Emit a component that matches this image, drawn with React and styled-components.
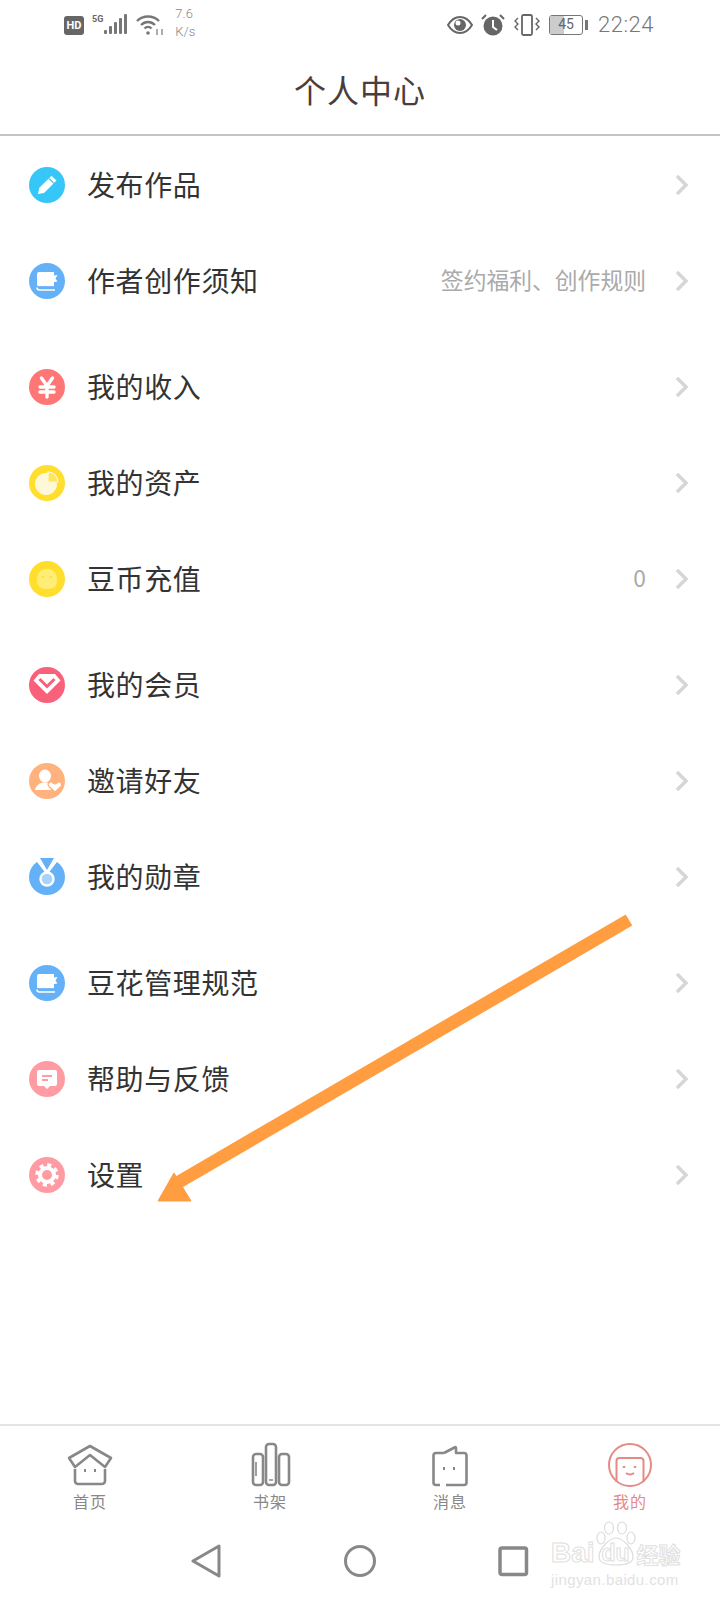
import React from 'react';
import styled, { createGlobalStyle } from 'styled-components';

const Global = createGlobalStyle`
  html, body { margin: 0; padding: 0; background: #fff; }
  body { font-family: "Noto Sans CJK SC", "Noto Sans", sans-serif; }
`;

const Disc = ({ color, children }) => (
  <svg width="38" height="38" viewBox="0 0 38 38">
    <circle cx="19" cy="19" r="18" fill={color} />
    {children}
  </svg>
);

const BookGlyph = () => (
  <>
    <path d="M9 12a2 2 0 0 1 2-2h15v3.500l3.500-.5-2 3.500 2 3-3.500.5v4.500H11a2 2 0 0 1-2-2z" fill="#fff" />
    <path d="M9 25.500q0 2.500 2.500 2.500H27" stroke="#fff" strokeWidth="1.600" fill="none" />
    <path d="M10 24.800h16" stroke="#64B1F8" strokeWidth="1.100" />
  </>
);

const menuIcons = {
  pencil: (
    <Disc color="#36C6F8">
      <path d="M10 28l1.200-6L23.500 9.800l5 4.700L16 27z" fill="#fff" />
      <path d="M21 12.500l5 4.800" stroke="#36C6F8" strokeWidth="1.100" />
    </Disc>
  ),
  book: <Disc color="#64B1F8"><BookGlyph /></Disc>,
  yen: (
    <Disc color="#FF7677">
      <path d="M13.500 10L19 18l5.500-8M12 19h14M12 24h14M19 18v11" stroke="#fff" strokeWidth="3.400" fill="none" strokeLinecap="round" />
    </Disc>
  ),
  pie: (
    <Disc color="#FFDE2E">
      <circle cx="18" cy="20" r="11" fill="#FFF8D8" />
      <path d="M20 8a10 10 0 0 1 10 10H20z" fill="#FFE55C" stroke="#FFF8D8" strokeWidth="1.200" />
    </Disc>
  ),
  coin: (
    <Disc color="#FFDE2E">
      <path d="M9 20c0-7 4-11 10-11s10 4 10 11-4 9-10 9-10-2-10-9z" fill="#FFEE75" />
      <circle cx="15" cy="17" r="0.900" fill="#F7D840" />
      <circle cx="23" cy="17" r="0.900" fill="#F7D840" />
    </Disc>
  ),
  diamond: (
    <Disc color="#F9607A">
      <path d="M11 8h16l5.500 6.500L19 28 5.500 14.500z" fill="#fff" />
      <path d="M11.500 13l7.500 7.500 7.500-7.500" stroke="#F9607A" strokeWidth="3" fill="none" />
    </Disc>
  ),
  friend: (
    <Disc color="#FFB27E">
      <ellipse cx="17" cy="14" rx="6" ry="6.500" fill="#fff" />
      <path d="M7 28c1-5 5-7.500 10-7.500 2 0 3.500.4 5 1l1 6.500z" fill="#fff" />
      <path d="M27 30l-6-5.500c-2.500-3 1.500-6.500 4-3.500l2 1 2-1c2.500-2.500 6 .5 4 3.500z" fill="#fff" stroke="#FFB27E" strokeWidth="1.200" />
    </Disc>
  ),
  medal: (
    <Disc color="#64B1F8">
      <path d="M6 0h26L19 17z" fill="#fff" />
      <path d="M12 0h14l-7 12z" fill="#64B1F8" />
      <circle cx="19" cy="21" r="6.500" fill="#A8D3FB" stroke="#fff" strokeWidth="2.400" />
    </Disc>
  ),
  feedback: (
    <Disc color="#FF9CA3">
      <path d="M9 12a2 2 0 0 1 2-2h16a2 2 0 0 1 2 2v12a2 2 0 0 1-2 2h-5l-3 3-3-3h-5a2 2 0 0 1-2-2z" fill="#fff" />
      <path d="M14 16h10M14 20h6" stroke="#FF9CA3" strokeWidth="1.800" />
    </Disc>
  ),
  gear: (
    <Disc color="#FF9CA3">
      <circle cx="19" cy="19" r="7" fill="none" stroke="#fff" strokeWidth="4" />
      <circle cx="19" cy="19" r="10" fill="none" stroke="#fff" strokeWidth="3.500" strokeDasharray="4 3.850" />
    </Disc>
  ),
};

const groups = [
  [
    { icon: 'pencil', label: '发布作品' },
    { icon: 'book', label: '作者创作须知', note: '签约福利、创作规则' },
  ],
  [
    { icon: 'yen', label: '我的收入' },
    { icon: 'pie', label: '我的资产' },
    { icon: 'coin', label: '豆币充值', note: '0' },
  ],
  [
    { icon: 'diamond', label: '我的会员' },
    { icon: 'friend', label: '邀请好友' },
    { icon: 'medal', label: '我的勋章' },
  ],
  [
    { icon: 'book', label: '豆花管理规范' },
    { icon: 'feedback', label: '帮助与反馈' },
    { icon: 'gear', label: '设置' },
  ],
];

const tabIcons = {
  home: (
    <>
      <path d="M8 27v12a3 3 0 0 0 3 3h24a3 3 0 0 0 3-3V27" />
      <path d="M23 4l21 12-6 9-15-12L8 25l-6-9z" strokeLinejoin="round" />
      <path d="M18 27v3M28 27v3" strokeWidth="2" />
    </>
  ),
  shelf: (
    <>
      <rect x="6" y="12" width="10" height="31" rx="3" />
      <rect x="19" y="2" width="10" height="41" rx="3" />
      <rect x="32" y="12" width="10" height="31" rx="3" />
      <path d="M22 38h4M9 20v14" strokeWidth="1.600" />
    </>
  ),
  chat: (
    <>
      <path d="M17 11H9a2.500 2.500 0 0 0-2.500 2.500v27A2.500 2.500 0 0 0 9 43h4M19 43h18a2.500 2.500 0 0 0 2.500-2.500v-27A2.500 2.500 0 0 0 37 11h-8V6q0-1.500-1.500-.5L17 11" strokeLinejoin="round" />
      <path d="M17 25v3M27 25v3" strokeWidth="2" />
    </>
  ),
  me: (
    <>
      <circle cx="23" cy="23" r="21" strokeWidth="2" />
      <path d="M9.500 40V19a3 3 0 0 1 3-3h21a3 3 0 0 1 3 3v21" strokeWidth="2" />
      <path d="M17 24v2M28 24v2" strokeWidth="2.400" />
      <path d="M19 31q4 3 8 0" strokeWidth="2" />
    </>
  ),
};

const tabs = [
  { icon: 'home', label: '首页' },
  { icon: 'shelf', label: '书架' },
  { icon: 'chat', label: '消息' },
  { icon: 'me', label: '我的', active: true },
];

export default function App() {
  return (
    <Page>
      <Global />
      <StatusBar>
        <StatusGroup>
          <HdBadge>HD</HdBadge>
          <Network>
            <NetLabel>5G</NetLabel>
            <svg width="24" height="22" viewBox="0 0 24 22" fill="#777">
              <rect x="0" y="16" width="3" height="4" rx="1" />
              <rect x="5" y="12" width="3" height="8" rx="1" />
              <rect x="10" y="8" width="3" height="12" rx="1" />
              <rect x="15" y="4" width="3" height="16" rx="1" />
              <rect x="20" y="0" width="3" height="20" rx="1" />
            </svg>
          </Network>
          <svg width="28" height="22" viewBox="0 0 28 22" fill="none" stroke="#777" strokeWidth="2.400">
            <path d="M1 7c6-6 16-6 22 0M5 11c4-4 10-4 14 0M8.500 14.500c2-2 5-2 7 0" />
            <circle cx="12" cy="19" r="1.800" fill="#777" stroke="none" />
            <path d="M21 15v6M26 15v6" strokeWidth="1.200" />
          </svg>
          <Speed>7.6<br />K/s</Speed>
        </StatusGroup>
        <StatusGroup>
          <svg width="26" height="18" viewBox="0 0 26 18">
            <path d="M1 9c3-5 7-8 12-8s9 3 12 8c-3 5-7 8-12 8S4 14 1 9z" fill="none" stroke="#666" strokeWidth="2" />
            <circle cx="13" cy="9" r="6" fill="#666" />
            <circle cx="11" cy="7" r="2.500" fill="#fff" />
          </svg>
          <svg width="24" height="24" viewBox="0 0 24 24">
            <circle cx="12" cy="13" r="9.500" fill="#666" />
            <path d="M12 7v7l4 3" stroke="#fff" strokeWidth="2" fill="none" />
            <path d="M1 6l4-4M23 6l-4-4" stroke="#666" strokeWidth="2" />
          </svg>
          <svg width="28" height="22" viewBox="0 0 28 22" fill="none" stroke="#666" strokeWidth="1.800">
            <rect x="9" y="1" width="10" height="20" rx="1.500" />
            <path d="M5 4l-3 3 3 3-3 3 3 3M23 4l3 3-3 3 3 3-3 3" strokeWidth="1.400" />
          </svg>
          <Battery>
            <BatteryFill />
            <BatteryText>45</BatteryText>
          </Battery>
          <BatteryNub />
          <Clock>22:24</Clock>
        </StatusGroup>
      </StatusBar>

      <Header>个人中心</Header>

      <Menu>
        {groups.map((group, i) => (
          <Group key={i}>
            {group.map((item) => (
              <Row key={item.label}>
                <IconSlot>{menuIcons[item.icon]}</IconSlot>
                <Label>{item.label}</Label>
                {item.note && <Note>{item.note}</Note>}
                <svg width="14" height="22" viewBox="0 0 14 22" fill="none" stroke="#d6d6d6" strokeWidth="3.500">
                  <path d="M2 2l9 9-9 9" />
                </svg>
              </Row>
            ))}
          </Group>
        ))}
      </Menu>

      <TabBar>
        {tabs.map((tab) => (
          <Tab key={tab.label} $active={tab.active}>
            <svg width="46" height="46" viewBox="0 0 46 46" fill="none" stroke="currentColor" strokeWidth="2.600">
              {tabIcons[tab.icon]}
            </svg>
            <TabLabel>{tab.label}</TabLabel>
          </Tab>
        ))}
      </TabBar>

      <NavBar>
        <svg width="32" height="34" viewBox="0 0 32 34" fill="none" stroke="#888" strokeWidth="3" strokeLinejoin="round">
          <path d="M29 2v30L3 17z" />
        </svg>
        <svg width="32" height="34" viewBox="0 0 32 34" fill="none" stroke="#888" strokeWidth="3">
          <circle cx="16" cy="17" r="14.500" />
        </svg>
        <svg width="32" height="34" viewBox="0 0 32 34" fill="none" stroke="#888" strokeWidth="3.500" strokeLinejoin="round">
          <rect x="2" y="4" width="26.500" height="26.500" rx="2" />
        </svg>
      </NavBar>

      <Watermark>
        <WatermarkBrand>
          Bai
          <PawWord>
            <svg width="42" height="46" viewBox="0 0 42 46" fill="none" stroke="#dcdcdc" strokeWidth="1.200">
              <ellipse cx="6" cy="17" rx="4" ry="6" />
              <ellipse cx="14" cy="7" rx="4.500" ry="6" />
              <ellipse cx="27" cy="7" rx="4.500" ry="6" />
              <ellipse cx="36" cy="17" rx="4" ry="6" />
              <path d="M4 36c0-8 10-19 17-19s17 11 17 19c0 6-8 8-17 8S4 42 4 36z" />
            </svg>
            du
          </PawWord>
          <CjkMark>经验</CjkMark>
        </WatermarkBrand>
        <WatermarkUrl>jingyan.baidu.com</WatermarkUrl>
      </Watermark>

      <ArrowMark width="720" height="1600" viewBox="0 0 720 1600">
        <path d="M629 920L172 1186" stroke="#FF9D40" strokeWidth="13" />
        <path d="M158 1201h33l-17-28z" fill="#FF9D40" stroke="#FF9D40" strokeWidth="1" strokeLinejoin="round" />
      </ArrowMark>
    </Page>
  );
}

const Page = styled.div`
  position: relative;
  width: 720px;
  height: 1600px;
  overflow: hidden;
  display: flex;
  flex-direction: column;
  background: #fff;
`;

const StatusBar = styled.div`
  height: 50px;
  padding: 0 66px 0 64px;
  display: flex;
  align-items: center;
  justify-content: space-between;
`;

const StatusGroup = styled.div`
  display: flex;
  align-items: center;
  gap: 8px;
`;

const HdBadge = styled.div`
  width: 20px;
  height: 19px;
  border-radius: 3px;
  background: #666;
  color: #fff;
  font: 700 11px/19px "Roboto", sans-serif;
  text-align: center;
`;

const Network = styled.div`
  display: flex;
  align-items: flex-end;
  gap: 1px;
`;

const NetLabel = styled.span`
  align-self: flex-start;
  font: 700 9px/10px "Roboto", sans-serif;
  color: #666;
`;

const Speed = styled.div`
  margin-left: 3px;
  margin-top: -4px;
  font: 300 13px/18px "Roboto", sans-serif;
  color: #888;
`;

const Battery = styled.div`
  position: relative;
  width: 34px;
  height: 20px;
  margin-right: -6px;
  border: 1.5px solid #777;
  border-radius: 3px;
  box-sizing: border-box;
  overflow: hidden;
`;

const BatteryFill = styled.div`
  width: 45%;
  height: 100%;
  background: #ccc;
`;

const BatteryText = styled.span`
  position: absolute;
  inset: 0;
  text-align: center;
  font: 400 14px/17px "Roboto", sans-serif;
  color: #666;
`;

const BatteryNub = styled.div`
  width: 3px;
  height: 10px;
  background: #777;
`;

const Clock = styled.div`
  margin-left: 2px;
  font: 300 22px/26px "Roboto", sans-serif;
  letter-spacing: 0.5px;
  color: #777;
`;

const Header = styled.div`
  height: 77px;
  padding-bottom: 7px;
  border-bottom: 2px solid #c4c4c4;
  display: flex;
  align-items: center;
  justify-content: center;
  font-size: 32px;
  letter-spacing: 1px;
  color: #4a3d3d;
`;

const Menu = styled.div`
  flex: 1;
  padding-top: 1px;
  display: flex;
  flex-direction: column;
  gap: 10px;
`;

const Group = styled.div`
  display: flex;
  flex-direction: column;
`;

const Row = styled.div`
  height: 96px;
  padding: 0 31px 0 28px;
  display: flex;
  align-items: center;
`;

const IconSlot = styled.div`
  width: 38px;
  height: 38px;
  margin-right: 21px;
  flex: none;
`;

const Label = styled.div`
  flex: 1;
  padding-bottom: 2px;
  font-size: 28px;
  letter-spacing: 0.6px;
  color: #333;
`;

const Note = styled.div`
  margin-right: 29px;
  padding-bottom: 3px;
  font-size: 22.8px;
  color: #aaa;
`;

const TabBar = styled.div`
  height: 99px;
  box-sizing: border-box;
  padding-top: 16px;
  border-top: 2px solid #e4e4e4;
  display: grid;
  grid-template-columns: repeat(4, 1fr);
`;

const Tab = styled.div`
  display: flex;
  flex-direction: column;
  align-items: center;
  color: ${(p) => (p.$active ? '#E58A86' : '#888')};
`;

const TabLabel = styled.div`
  margin-top: 2px;
  font-size: 16px;
  line-height: 22px;
  letter-spacing: 1px;
`;

const NavBar = styled.div`
  height: 75px;
  padding-bottom: 2px;
  display: flex;
  justify-content: center;
  align-items: center;
  gap: 122px;
`;

const Watermark = styled.div`
  position: absolute;
  left: 551px;
  top: 1538px;
  width: 130px;
  display: flex;
  flex-direction: column;
  color: transparent;
`;

const WatermarkBrand = styled.div`
  display: flex;
  align-items: center;
  font: 700 28px/30px "Liberation Sans", sans-serif;
  white-space: nowrap;
  -webkit-text-stroke: 1px #e0e0e0;
`;

const PawWord = styled.span`
  position: relative;
  width: 42px;
  text-align: center;
  font-size: 23px;

  svg {
    position: absolute;
    left: 0;
    top: -17px;
  }
`;

const CjkMark = styled.span`
  font: 700 22px/30px "Noto Sans CJK SC", sans-serif;
`;

const WatermarkUrl = styled.div`
  margin-top: 4px;
  font: 400 15px/16px "Liberation Sans", sans-serif;
  letter-spacing: 0.4px;
  color: #e2e2e2;
`;

const ArrowMark = styled.svg`
  position: absolute;
  inset: 0;
  pointer-events: none;
`;
